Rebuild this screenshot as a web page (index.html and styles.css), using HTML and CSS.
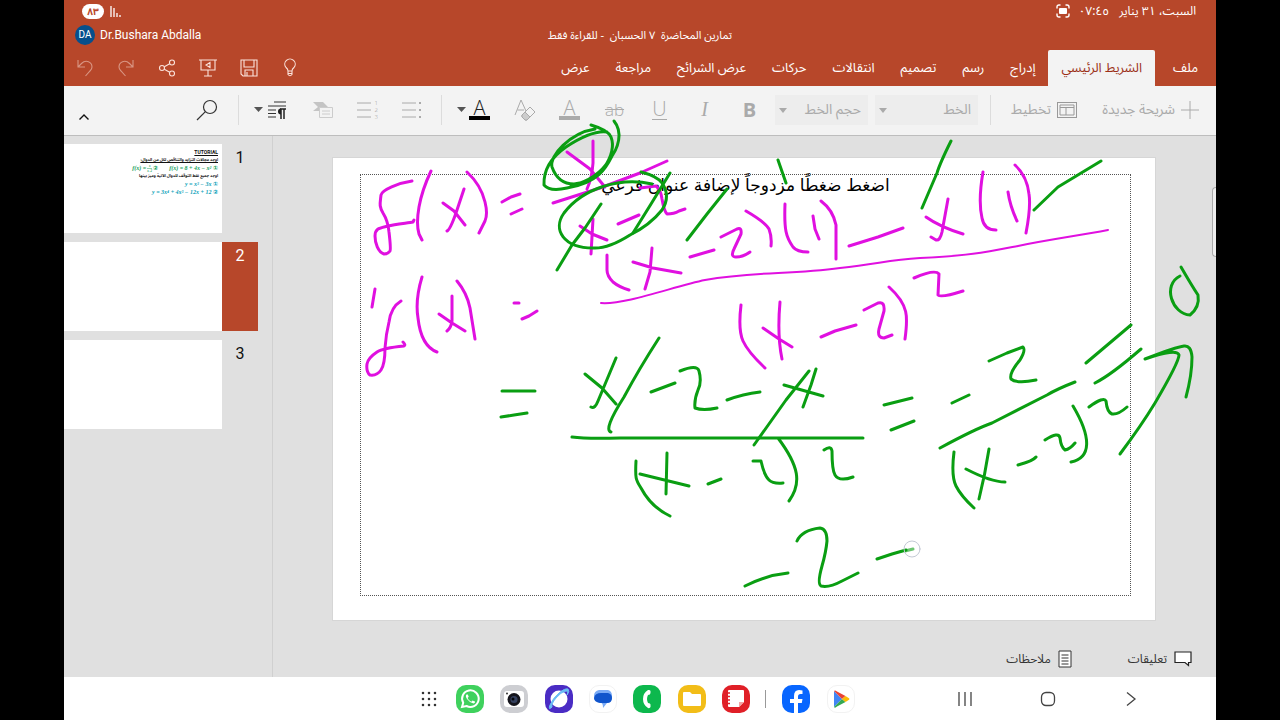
FILE: index.html
```html
<!DOCTYPE html>
<html lang="ar">
<head>
    <meta charset="UTF-8">
    <meta name="viewport" content="width=device-width, initial-scale=1.0">
    <title>تمارين المحاضرة ٧ الحسبان</title>
    <link rel="stylesheet" href="styles.css">
</head>
<body>
    <div class="tablet" dir="rtl">
        <header class="header">
            <div class="status">
                <span>السبت، ٣١ يناير</span>
                <span class="time">٠٧:٤٥</span>
                <svg class="cast" width="14" height="14" viewBox="0 0 14 14" fill="none" stroke="#fff" stroke-width="1.4"><path d="M1 4.500V3Q1 1 3 1H4.500M9.500 1H11Q13 1 13 3V4.500M13 9.500V11Q13 13 11 13H9.500M4.500 13H3Q1 13 1 11V9.500"/><rect x="3" y="4" width="8" height="6" rx="1" fill="#fff" stroke="none"/></svg>
                <svg class="signal" width="12" height="12" viewBox="0 0 12 12" stroke="#fff" stroke-width="1.3"><path d="M2 1V12M5 3V12M8 8V12M11 10V12"/></svg>
                <span class="battery">٨٣</span>
            </div>
            <div class="title-row">
                <span></span>
                <h1>تمارين المحاضرة &nbsp;٧ الحسبان &nbsp;- للقراءة فقط</h1>
                <div class="user"><span dir="ltr">Dr.Bushara Abdalla</span><span class="avatar">DA</span></div>
            </div>
            <div class="tab-row">
                <nav class="tabs">
                    <button class="tab tab-file">ملف</button>
                    <button class="tab active">الشريط الرئيسي</button>
                    <button class="tab">إدراج</button>
                    <button class="tab">رسم</button>
                    <button class="tab">تصميم</button>
                    <button class="tab">انتقالات</button>
                    <button class="tab">حركات</button>
                    <button class="tab">عرض الشرائح</button>
                    <button class="tab">مراجعة</button>
                    <button class="tab">عرض</button>
                </nav>
                <div class="quick">
                    <button aria-label="تلميحات"><svg width="20" height="20" viewBox="0 0 20 20"><path d="M8 13Q8 11 6 9.500A5.200 5.200 0 1 1 14 9.500Q12 11 12 13V16.500Q10 19 8 16.500ZM8 13H12M8 15.500H12"/></svg></button>
                    <button aria-label="حفظ"><svg width="20" height="20" viewBox="0 0 20 20"><path d="M2 2H18V18H4L2 16ZM5 2V9H15V2M6 18V12H14V18M8 14V18"/></svg></button>
                    <button aria-label="عرض تقديمي"><svg width="20" height="20" viewBox="0 0 20 20"><path d="M1 2H19M3 2V12H17V2M10 12V18M6 18H14M12 4.500V9.500L8 7Z"/></svg></button>
                    <button aria-label="مشاركة"><svg width="20" height="20" viewBox="0 0 20 20"><circle cx="5" cy="10" r="2.500"/><circle cx="15" cy="4.500" r="2.500"/><circle cx="15" cy="15.500" r="2.500"/><path d="M7.300 8.800L12.700 5.700M7.300 11.200L12.700 14.300"/></svg></button>
                    <button aria-label="إعادة" disabled><svg width="20" height="20" viewBox="0 0 20 20"><path d="M17 2V9H10M17 9L13.500 5.500C9 1 3 4 3 9Q3 11 5 13L9.500 18"/></svg></button>
                    <button aria-label="تراجع" disabled><svg width="20" height="20" viewBox="0 0 20 20"><path d="M3 2V9H10M3 9L6.500 5.500C11 1 17 4 17 9Q17 11 15 13L10.500 18"/></svg></button>
                </div>
            </div>
        </header>

        <div class="ribbon">
            <button class="command new-slide" disabled><svg width="18" height="20" viewBox="0 0 18 20"><path d="M9 1V19M0 10H18" stroke="#aaa"/></svg>شريحة جديدة</button>
            <button class="command layout" disabled><svg width="20" height="16" viewBox="0 0 20 16" fill="none" stroke="#999"><rect x=".5" y=".5" width="19" height="15"/><path d="M3 3H17V13H3ZM3 5.500H17M9 5.500V13"/></svg>تخطيط</button>
            <span class="divider"></span>
            <div class="picker font-name">
                <select aria-label="الخط" disabled><option>الخط</option></select>
                <svg width="8" height="5" viewBox="0 0 8 5"><path d="M0 0H8L4 5Z" fill="#aaa"/></svg>
            </div>
            <div class="picker font-size">
                <select aria-label="حجم الخط" disabled><option>حجم الخط</option></select>
                <svg width="8" height="5" viewBox="0 0 8 5"><path d="M0 0H8L4 5Z" fill="#aaa"/></svg>
            </div>
            <div class="tools">
                <button class="bold" aria-label="غامق" disabled>B</button>
                <button class="italic" aria-label="مائل" disabled>I</button>
                <button class="underline" aria-label="تسطير" disabled><span>U</span></button>
                <button class="strike" aria-label="يتوسطه خط" disabled>ab</button>
                <button aria-label="لون التمييز" disabled><span class="swatch">A</span></button>
                <button aria-label="مسح التنسيق" disabled><svg width="22" height="22" viewBox="0 0 22 22" fill="none" stroke="#aaa"><path d="M1 16L7 1L12 12M3.500 11H10"/><path d="M8 16L16 8L21 13L13 21H11L8 18ZM11 13L16 18"/><path d="M8 16L11 13L16 18L13 21H11L8 18Z" fill="#ccc"/></svg></button>
                <button aria-label="لون الخط"><span class="swatch black">A</span></button>
            </div>
            <button class="caret" aria-label="ألوان الخط"><svg width="9" height="5" viewBox="0 0 9 5"><path d="M0 0H9L4.500 5Z" fill="#555"/></svg></button>
            <span class="divider"></span>
            <div class="tools">
                <button aria-label="تعداد نقطي" disabled><svg width="22" height="18" viewBox="0 0 22 18" stroke="#aaa"><path d="M1 2H15M1 9H15M1 16H15"/><path d="M18 2H20M18 9H20M18 16H20" stroke-width="2"/></svg></button>
                <button aria-label="تعداد رقمي" disabled><svg width="22" height="22" viewBox="0 0 22 22"><path d="M1 4H15M1 11H15M1 18H15" stroke="#aaa"/><text x="22" y="6">1</text><text x="22" y="13">2</text><text x="22" y="20">3</text></svg></button>
                <button aria-label="مسافة بادئة" disabled><svg width="22" height="18" viewBox="0 0 22 18"><path d="M2 1H12L17 6L13 10H2L7 6Z" fill="#c4c4c4"/><path d="M8.500 6.500H21.500V16.500H8.500Z" fill="#f3f3f3" stroke="#ccc"/><path d="M11 10H19M11 13H19" stroke="#ccc"/></svg></button>
                <button aria-label="تنسيق الفقرة"><svg width="20" height="20" viewBox="0 0 20 20"><path d="M7 2H19M1 6H19M1 10H9M1 13.500H9M1 17H9" stroke="#333"/><path d="M14 9V19M17 9V19M13 9H19" stroke="#222" stroke-width="1.500"/><path d="M14 8.500A3 3 0 0 0 14 14.500Z" fill="#222"/></svg></button>
            </div>
            <button class="caret" aria-label="خيارات الفقرة"><svg width="9" height="5" viewBox="0 0 9 5"><path d="M0 0H9L4.500 5Z" fill="#555"/></svg></button>
            <span class="divider"></span>
            <button class="search" aria-label="بحث"><svg width="22" height="22" viewBox="0 0 22 22" fill="none" stroke="#333" stroke-width="1.200"><circle cx="14" cy="8" r="6.500"/><path d="M9.400 12.600L1 21"/></svg></button>
            <button class="collapse" aria-label="طي الشريط"><svg width="10" height="6" viewBox="0 0 10 6" fill="none" stroke="#111" stroke-width="1.400"><path d="M.5 5.500L5 1L9.500 5.500"/></svg></button>
        </div>

        <main class="workspace">
            <section class="stage">
                <div class="slide">
                    <p class="placeholder">اضغط ضغطًا مزدوجاً لإضافة عنوان فرعي</p>
                </div>
                <div class="footer">
                    <button><svg width="18" height="16" viewBox="0 0 18 16" fill="#fff" stroke="#222" stroke-width="1.200"><path d="M1 1H17V11.500H14.500V14.500L11 11.500H1Z"/></svg>تعليقات</button>
                    <button><svg width="14" height="18" viewBox="0 0 14 18" fill="#fff" stroke="#333"><path d="M1 1H13V17H1ZM3.500 5H10.500M3.500 8H10.500M3.500 11H10.500M3.500 14H10.500"/></svg>ملاحظات</button>
                </div>
                <span class="scrollbar"></span>
            </section>
            <aside class="slides">
                <div class="slide-item">
                    <span class="number">1</span>
                    <div class="thumb">
                        <p class="heading latin">TUTORIAL</p>
                        <p class="heading">اوجد مجالات التزايد والتناقص لكل من الدوال:</p>
                        <p class="formula green" dir="ltr"><span>f(x) =</span><span class="fraction"><span>x</span><span>x−2</span></span><span class="second">②</span><span>f(x) = 8 + 4x − x² ①</span></p>
                        <p>اوجد جميع نقط التوقف للدوال الآتية وميز بينها</p>
                        <p class="formula blue" dir="ltr">y = x³ − 3x ①</p>
                        <p class="formula blue" dir="ltr">y = 3x⁴ + 4x³ − 12x + 12 ②</p>
                    </div>
                </div>
                <div class="slide-item selected"><span class="number">2</span><div class="thumb"></div></div>
                <div class="slide-item"><span class="number">3</span><div class="thumb"></div></div>
            </aside>
        </main>

        <nav class="dock" dir="ltr">
            <button class="all-apps" aria-label="التطبيقات"><svg width="16" height="16" viewBox="0 0 16 16" stroke="#333" stroke-width="2.600" stroke-linecap="round"><path d="M2 2h0M8 2h0M14 2h0M2 8h0M8 8h0M14 8h0M2 14h0M8 14h0M14 14h0"/></svg></button>
            <div class="apps">
                <button class="app whatsapp" aria-label="WhatsApp"><svg viewBox="0 0 28 28" fill="none" stroke="#fff" stroke-width="2"><path d="M6 22L7.200 17.800A8.300 8.300 0 1 1 10.500 21Z"/><path d="M10.500 9.500Q9 11 11 14T17.500 18.500Q19.500 18 19 16.500L16.500 15.500L15.300 16.800Q12.500 15.500 11.600 13L12.700 11.800L11.800 9.500Z" fill="#fff" stroke="none"/></svg></button>
                <button class="app camera" aria-label="الكاميرا"><svg viewBox="0 0 28 28"><rect x="4" y="6" width="20" height="16" rx="3" fill="#fff"/><circle cx="14" cy="14.500" r="6.500" fill="#15151c"/><circle cx="14" cy="14.500" r="3.600" fill="#35415f"/><circle cx="13" cy="14" r="1.500" fill="#05070b"/><circle cx="7" cy="8.500" r="1" fill="#333"/></svg></button>
                <button class="app browser" aria-label="الإنترنت"><svg viewBox="0 0 28 28"><circle cx="14" cy="14" r="8.500" fill="#fff"/><path d="M7 22Q3 26 5 20Q8 13 14 8T23 4Q25 6 22 10Q24 6 21 6Q16 7 11 13T7 22Z" fill="#6bbcf4" stroke="#6bbcf4"/></svg></button>
                <button class="app messages" aria-label="الرسائل"><svg viewBox="0 0 28 28"><path d="M10 5H19Q23 6 23 11Q23 17 18 18L14 23Q14 18 12 18Q5 17 5 11Q5 6 10 5Z" fill="#79aaf5"/><path d="M12 8H19Q23 9 23 13Q23 18 18 18H11Q5 17 5 13Q6 8 12 8Z" fill="#1155cc"/></svg></button>
                <button class="app phone" aria-label="الهاتف"><svg viewBox="0 0 28 28"><path d="M15 5Q10 8 10 14T15 23Q17 23.500 17.500 22V19.500Q17.500 18 15 18Q13 14 15 10Q17.500 10 17.500 8V6Q17 4.500 15 5Z" fill="#fff"/></svg></button>
                <button class="app files" aria-label="الملفات"><svg viewBox="0 0 28 28"><path d="M5 8Q5 7 6 7H12L14 9H22Q23 9 23 10V20Q23 21 22 21H6Q5 21 5 20Z" fill="#fff"/></svg></button>
                <button class="app notes" aria-label="الملاحظات"><svg viewBox="0 0 28 28"><path d="M7 5H21Q22 5 22 6V17L17 22H7Q6 22 6 21V6Q6 5 7 5Z" fill="#fff"/><path d="M17 22V17H22Z" fill="#f5a2a4"/><path d="M4.500 8H8M4.500 11.500H8M4.500 15H8M4.500 18.500H8" stroke="#e01f27" stroke-width="1.500"/></svg></button>
            </div>
            <span class="dock-divider"></span>
            <button class="app facebook" aria-label="Facebook"><svg viewBox="0 0 28 28"><path d="M12 28V18H8V14H12V11Q12 5 17 5Q19 5 20.500 5.500V9H18.500Q16 9 16 11.500V14H20.500L19.800 18H16V28Z" fill="#fff"/></svg></button>
            <button class="app play" aria-label="Play"><svg viewBox="0 0 28 28"><path d="M7 6L15 14L7 22Z" fill="#4285f4"/><path d="M7 6Q8 5 10 6.500L18.500 11L15 14Z" fill="#ea4335"/><path d="M7 22Q8 23.500 10 21.500L18.500 17L15 14Z" fill="#34a853"/><path d="M18.500 11L22 13.200Q23 14 22 14.800L18.500 17L15 14Z" fill="#fbbc04"/></svg></button>
            <div class="system">
                <button aria-label="الأخيرة"><svg width="16" height="16" viewBox="0 0 16 16"><path d="M2 1V15M8 1V15M14 1V15"/></svg></button>
                <button aria-label="الرئيسية"><svg width="16" height="16" viewBox="0 0 16 16"><rect x="1.500" y="1.500" width="13" height="13" rx="4.500"/></svg></button>
                <button aria-label="رجوع"><svg width="16" height="16" viewBox="0 0 16 16"><path d="M4 1.500L12 8L4 14.500"/></svg></button>
            </div>
        </nav>

        <!-- handwriting -->
        <svg class="ink" viewBox="64 0 1152 720" preserveAspectRatio="xMidYMin meet">
            <g class="pink">
                <!-- f(x) = -->
                <path d="M412 181C398 183 382 190 381 195C380 204 379 206 383 213Q388 221 389 232Q391 249 390 251Q388 254 384 254C378 252 375 243 375 236C375 228 380 228 388 226C395 224 408 223 413 222L414 220"/>
                <path d="M431 171Q422 190 419 207T419 234L422 240M464 189L456 213Q450 230 447 231M443 203L454 211L465 225M467 172Q481 185 485 202Q488 214 485 221L479 233M502 202L511 197L520 194M511 214L522 209"/>
                <!-- x / (x - 2) -->
                <path d="M593 141V163Q592 178 587 189M567 152L590 169L605 187M553 203L600 188L640 173L667 161M593 219L591 254M580 226L592 234L607 240M618 224L639 215M640 188L656 186Q661 190 662 199Q664 211 667 214Q674 214 679 211L685 209"/>
                <!-- f'(x) = -->
                <path d="M375 289L372 307M401 301Q391 307 389 322Q386 334 385 348Q385 364 381 370Q377 376 370 375Q366 372 367 364Q368 358 377 352Q383 348 404 346Q406 345 403 342M422 277Q415 300 418 318Q421 346 437 352M452 296V321Q451 328 447 331M439 314L452 323L465 331M457 281Q467 293 470 308L475 339M514 303H519M522 319L529 316L537 311"/>
                <!-- numerator -->
                <path d="M607 255V270Q607 276 613 282Q619 287 629 290M652 248L650 272L645 289M633 262L653 268L681 273M690 257L714 250M721 237L737 229Q742 227 741 234L734 249Q730 257 736 257Q743 257 750 252M746 211Q765 222 769 229Q772 237 771 246M785 204C784 230 786 237 793 247Q797 252 808 252M813 216L815 229L819 239M821 201Q833 210 836 225L836 259"/>
                <path d="M849 246L878 237L903 228M948 199L942 232Q940 241 936 240L931 237M926 217Q940 227 963 234M983 172Q978 201 982 218Q984 230 996 230M1008 192Q1010 206 1017 221M1015 165Q1027 176 1029 194Q1031 207 1026 233"/>
                <path class="bar" d="M601 303C625 305 675 286 705 280C755 271 790 275 840 268C879 264 887 260 920 258C969 256 987 252 1018 246C1052 239 1077 236 1108 230"/>
                <!-- denominator -->
                <path d="M741 305Q738 330 743 341T765 368M780 302Q777 335 782 359M763 328L779 339L792 347M821 337L835 331L856 325M864 310L878 303Q885 301 884 311L879 329Q877 338 884 338L892 335M889 287C909 305 908 317 905 339M914 278Q935 269 939 274L938 295Q941 298 963 291"/>
            </g>
            <g class="green">
                <!-- circled x and x - 2 -->
                <path d="M591 125Q608 130 611 137Q616 150 604 168Q591 183 574 184Q558 184 552 167C549 156 570 133 595 129M607 132Q592 130 566 147Q543 163 544 185Q550 192 567 188C598 183 606 168 612 156M614 121C623 132 619 148 609 160Q598 179 571 186"/>
                <path d="M641 172Q657 176 662 183Q671 196 662 210Q650 225 630 235Q608 249 593 248C564 248 552 230 564 213C583 188 620 177 652 184"/>
                <path d="M601 204L585 228L572 245L557 270M670 173L651 204L633 233M727 189L707 214L687 240M778 160L786 183M951 141Q940 163 937 173L922 208M1101 161L1058 187L1034 210"/>
                <!-- = (x - 2 - x) / (x - 2)^2 -->
                <path d="M502 391H535M501 417L514 415L527 413M585 374L602 388L616 404M616 358L598 401Q595 409 591 407M659 338Q639 369 624 397Q603 430 611 432M651 392L675 383M680 371Q697 364 699 371Q702 382 698 390Q694 400 695 408Q703 411 717 408M727 400Q743 394 760 392M784 385L823 396M816 369L811 385L803 407M809 371L786 400L754 445"/>
                <path d="M572 437Q586 439 620 438H863M636 461C635 479 636 480 641 488Q651 507 670 516M667 453L666 494M640 474L689 486M708 484L721 479M753 461H761Q764 475 769 480Q773 484 783 483M778 438C799 466 802 483 789 501M824 450Q831 445 832 451Q832 470 835 475Q839 482 853 477"/>
                <!-- = -2 / (x - 2)^2 = -->
                <path d="M884 405L912 398M891 430L914 421M952 403L969 395M989 361L1007 353L1023 347Q1026 350 1020 360Q1009 373 1011 379Q1017 384 1036 380M940 448Q975 429 992 423L1047 395Q1057 389 1075 382M954 452Q951 476 956 486T974 508M989 449Q985 475 979 499M966 469Q991 482 1005 482M1018 465Q1033 461 1036 457M1045 440Q1059 431 1060 438Q1061 447 1065 450Q1070 449 1075 443M1073 406C1092 438 1091 458 1071 462M1089 407Q1104 396 1106 401Q1107 412 1112 414Q1118 415 1127 407M1086 363L1131 325M1095 383Q1111 375 1141 349"/>
                <!-- arrow to 0 -->
                <path d="M1120 454Q1141 426 1155 403Q1179 362 1179 355Q1177 348 1145 359Q1176 347 1184 346Q1191 345 1192 357Q1192 375 1186 397M1180 276C1162 285 1172 314 1190 315Q1200 307 1198 295Q1192 286 1181 267"/>
                <!-- -2 = -->
                <path d="M745 586Q767 575 788 573M797 541Q802 530 820 528Q827 529 827 541Q826 552 822 566Q817 584 821 586Q829 588 842 581L858 573M877 559L892 554L906 550"/>
                <path class="fade" d="M905 551L913 549"/>
            </g>
            <circle class="pen" cx="912" cy="549" r="8"/>
        </svg>
    </div>
</body>
</html>
```
FILE: styles.css
```css
* {
    box-sizing: border-box;
}
body {
    margin: 0;
    background-color: #000;
    font-family: "Noto Sans Arabic", Roboto, "DejaVu Sans", sans-serif;
    font-size: 12px;
    color: #333;
}
h1, p {
    margin: 0;
}
button, select {
    font: inherit;
    color: inherit;
    background: none;
    border: 0;
    padding: 0;
}
button {
    display: flex;
    align-items: center;
    justify-content: center;
    white-space: nowrap;
}
svg {
    flex: none;
}
.tablet {
    position: relative;
    display: flex;
    flex-direction: column;
    width: 90%;
    min-height: 100vh;
    margin: 0 auto;
    background-color: #e0e0e0;
}

/* header */
.header {
    background-color: #b7472a;
    color: #fff;
}
.status {
    display: flex;
    align-items: center;
    gap: 10px;
    height: 22px;
    padding: 0 20px 0 18px;
}
.cast {
    margin-right: -2px;
}
.signal {
    margin-right: auto;
}
.battery {
    width: 22px;
    margin-right: -5px;
    border-radius: 8px;
    background-color: #fff;
    color: #b7472a;
    font-size: 10px;
    font-weight: bold;
    line-height: 15px;
    text-align: center;
}
.title-row {
    display: grid;
    grid-template-columns: 1fr auto 1fr;
    align-items: center;
    height: 28px;
    padding: 0 11px 2px;
}
h1 {
    font-size: 11px;
    font-weight: normal;
}
.user {
    display: flex;
    align-items: center;
    justify-content: flex-end;
    gap: 5px;
    font-family: Roboto, sans-serif;
}
.avatar {
    width: 20px;
    border-radius: 50%;
    background-color: #064f8c;
    font-size: 10px;
    line-height: 20px;
    text-align: center;
}
.tab-row {
    display: flex;
    justify-content: space-between;
    height: 36px;
}
.tabs, .quick {
    display: flex;
}
.tab {
    padding: 0 13px;
    font-size: 13px;
}
.tab-file {
    padding: 0 18px;
}
.tab.active {
    border-radius: 2px 2px 0 0;
    background-color: #f3f3f3;
    color: #9b2f16;
}
.quick button {
    width: 41px;
}
.quick svg {
    fill: none;
    stroke: #fbe3dc;
    stroke-width: 1.1;
}
.quick button:disabled {
    opacity: 0.5;
}

/* ribbon */
.ribbon {
    display: flex;
    align-items: center;
    height: 50px;
    padding: 0 17px 2px 15px;
    background-color: #f3f3f3;
    border-bottom: 1px solid #bdbdbd;
    font-size: 14px;
}
.command {
    justify-content: flex-start;
    gap: 6px;
    color: #aaa;
}
.new-slide {
    width: 97px;
}
.layout {
    width: 68px;
    margin-right: 25px;
}
.divider {
    width: 1px;
    height: 30px;
    margin: 0 21px 0 12px;
    background-color: #dcdcdc;
}
.picker {
    position: relative;
    height: 30px;
    margin-left: 7px;
    background-color: #ededed;
}
.picker select {
    width: 100%;
    height: 100%;
    padding: 0 7px;
    color: #aaa;
    opacity: 1;
    appearance: none;
}
.picker svg {
    position: absolute;
    left: 4px;
    top: 13px;
}
.font-name {
    width: 103px;
}
.font-size {
    width: 93px;
    margin-left: 3px;
}
.tools {
    display: flex;
}
.tools button {
    width: 45px;
    height: 30px;
    color: #aaa;
    font-family: "Open Sans", sans-serif;
    font-size: 20px;
    font-weight: 300;
}
.tools text {
    font-size: 6px;
    fill: #999;
}
.tools .bold {
    font-weight: bold;
}
.tools .italic {
    font-family: "Liberation Serif", serif;
    font-style: italic;
}
.underline span {
    border-bottom: 1px solid #aaa;
    line-height: 20px;
}
.tools .strike {
    font-size: 17px;
    text-decoration: line-through;
}
.swatch {
    width: 21px;
    border-bottom: 4px solid #aaa;
    line-height: 17px;
}
.swatch.black {
    border-color: #000;
    color: #222;
}
.caret {
    width: 9px;
    margin-right: -9px;
}
.search {
    width: 22px;
}
.collapse {
    margin: 14px auto 0 0;
}
/* divider spacing differs per group */
.layout + .divider {
    margin-right: 18px;
}
.caret + .divider {
    margin: 0 15px 0 7px;
}
.divider + .search {
    margin-right: 13px;
}

/* workspace */
.workspace {
    display: flex;
    flex: 1;
}
.slides {
    order: 2;
    width: 209px;
    padding: 8px 14px 0 0;
    border-right: 1px solid #d0d0d0;
}
.slide-item {
    display: flex;
    height: 89px;
    margin-bottom: 9px;
}
.number {
    width: 36px;
    padding-top: 4px;
    color: #111;
    font-family: Roboto, sans-serif;
    font-size: 16px;
    text-align: center;
}
.selected .number {
    background-color: #b7472a;
    color: #fff;
}
.thumb {
    flex: 1;
    padding: 4px;
    background-color: #fff;
    color: #111;
    font-size: 4px;
    font-weight: bold;
    line-height: 8px;
}
.heading {
    text-decoration: underline;
}
.latin {
    font-family: Roboto, sans-serif;
    font-size: 5px;
}
.formula {
    display: flex;
    justify-content: flex-end;
    align-items: center;
    gap: 1px;
    height: 8px;
    font-family: "Liberation Serif", "DejaVu Sans", serif;
    font-size: 6px;
    font-style: italic;
}
.fraction {
    display: flex;
    flex-direction: column;
    font-size: 3px;
    line-height: 4px;
    text-align: center;
}
.fraction span + span {
    border-top: 1px solid #8fd0b0;
}
.second {
    margin-right: 10px;
}
.green {
    color: #12a05a;
}
.blue {
    color: #0aa0b8;
}
.stage {
    position: relative;
    display: flex;
    flex: 1;
    flex-direction: column;
    justify-content: space-between;
    padding-top: 21px;
}
.slide {
    aspect-ratio: 16 / 9;
    margin: 0 60px 0 59px;
    padding: 16px 24px 24px 27px;
    border: 1px solid #d6d6d6;
    background-color: #fff;
}
.placeholder {
    height: 100%;
    border: 1px dotted #555;
    color: #000;
    font-family: "Liberation Sans", "DejaVu Sans", sans-serif;
    font-size: 17px;
    line-height: 22px;
    text-align: center;
}
.footer {
    display: flex;
    gap: 56px;
    height: 36px;
    padding: 0 24px;
}
.footer button {
    gap: 7px;
}
.scrollbar {
    position: absolute;
    top: 51px;
    right: 0;
    width: 4px;
    height: 70px;
    border: 1px solid #aaa;
    border-right: 0;
    border-radius: 4px 0 0 4px;
    background-color: #eee;
}

/* dock */
.dock {
    display: flex;
    align-items: center;
    height: 43px;
    padding: 0 77px 0 357px;
    background-color: #fff;
}
.apps {
    display: flex;
    justify-content: space-between;
    width: 294px;
    margin-left: 19px;
}
.app {
    width: 28px;
    height: 28px;
    border-radius: 10px;
}
.app svg {
    width: 28px;
    height: 28px;
}
.whatsapp {
    background-color: #3fd15d;
}
.camera {
    background-color: #cdced2;
}
.browser {
    background-color: #4a2cc4;
}
.messages, .play {
    border: 1px solid #f2f2f2;
}
.phone {
    background-color: #0db84d;
}
.files {
    background-color: #f2bd18;
}
.notes {
    background-color: #e01f27;
}
.facebook {
    background-color: #0866ff;
}
.dock-divider {
    width: 1px;
    height: 18px;
    margin: 0 16px 0 15px;
    background-color: #999;
}
.play {
    margin-left: 17px;
}
.system {
    display: flex;
    gap: 67px;
    margin-left: auto;
}
.system svg {
    fill: none;
    stroke: #444;
    stroke-width: 1.3;
}

/* handwriting layer */
.ink {
    position: absolute;
    top: 0;
    left: 0;
    width: 100%;
    pointer-events: none;
    fill: none;
    stroke-width: 3;
    stroke-linecap: round;
    stroke-linejoin: round;
}
.pink {
    stroke: #e010e0;
}
.ink .green {
    stroke: #0a9e12;
}
.bar {
    stroke-width: 2;
}
.fade {
    opacity: 0.6;
}
.pen {
    stroke: #c3c9d4;
    stroke-width: 1;
}
```
